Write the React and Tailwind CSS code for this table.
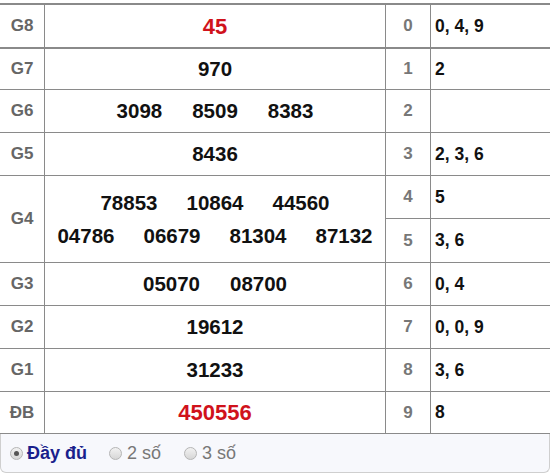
import React from 'react';

const rows = [
  { label: 'G8', nums: ['45'], big: 'red' },
  { label: 'G7', nums: ['970'] },
  { label: 'G6', nums: ['3098', '8509', '8383'] },
  { label: 'G5', nums: ['8436'] },
  { label: 'G4', nums: [['78853', '10864', '44560'], ['04786', '06679', '81304', '87132']] },
  { label: 'G3', nums: ['05070', '08700'] },
  { label: 'G2', nums: ['19612'] },
  { label: 'G1', nums: ['31233'] },
  { label: 'ĐB', nums: ['450556'], big: 'special' },
];

const heads = ['0, 4, 9', '2', '', '2, 3, 6', '5', '3, 6', '0, 4', '0, 0, 9', '3, 6', '8'];

// row boxes incl. bottom border
const rowH = ['h-[44px]', 'h-[41px]', 'h-[43px]', 'h-[43px]', 'h-[87px]', 'h-[43px]', 'h-[43px]', 'h-[43px]', 'h-[42px]'];
const headH = ['h-[44px]', 'h-[41px]', 'h-[43px]', 'h-[43px]', 'h-[43px]', 'h-[44px]', 'h-[43px]', 'h-[43px]', 'h-[43px]', 'h-[42px]'];

function Numbers({ row }) {
  if (row.big === 'red') {
    return <span className="text-[22px] text-[#d0121b]">{row.nums[0]}</span>;
  }
  if (row.big === 'special') {
    return <span className="text-[22px] font-bold text-[#d0121b]">{row.nums[0]}</span>;
  }
  if (Array.isArray(row.nums[0])) {
    return (
      <div className="flex flex-col gap-[10px] leading-[23px]">
        {row.nums.map((line, i) => (
          <div key={i} className="flex justify-center gap-[29px]">
            {line.map((n) => <span key={n}>{n}</span>)}
          </div>
        ))}
      </div>
    );
  }
  return (
    <div className="flex justify-center gap-[30px]">
      {row.nums.map((n) => <span key={n}>{n}</span>)}
    </div>
  );
}

function Radio({ checked }) {
  return (
    <span className="w-[13px] h-[13px] rounded-full border border-[#b5b5b5] bg-gradient-to-b from-[#f2f2f2] to-[#d6d6d6] flex items-center justify-center">
      {checked && <span className="w-[5px] h-[5px] rounded-full bg-[#555]" />}
    </span>
  );
}

export default function App() {
  return (
    <div className="w-[550px] h-[474px] bg-white overflow-hidden font-['Liberation_Sans',Arial,sans-serif]">
      <div className="mt-[3px] border-t-2 border-[#8a8a8a] flex">
        {/* prizes */}
        <div className="w-[386px] flex flex-col">
          {rows.map((row, i) => (
            <div
              key={row.label}
              className={`flex ${rowH[i]} ${i === 0 ? 'border-b-2' : 'border-b'} border-[#8a8a8a]`}
            >
              <div className="w-[45px] border-r border-[#8a8a8a] flex items-center justify-center text-[17px] font-bold text-[#666]">
                {row.label}
              </div>
              <div className="flex-1 border-r border-[#8a8a8a] flex items-center justify-center text-[20.5px] font-bold text-[#111]">
                <Numbers row={row} />
              </div>
            </div>
          ))}
        </div>
        {/* head digits */}
        <div className="flex-1 flex flex-col">
          {heads.map((v, i) => (
            <div
              key={i}
              className={`flex ${headH[i]} ${i === 0 ? 'border-b-2' : 'border-b'} border-[#8a8a8a]`}
            >
              <div className="w-[45px] border-r border-[#8a8a8a] flex items-center justify-center text-[17px] font-bold text-[#777]">
                {i}
              </div>
              <div className="flex-1 flex items-center pl-[4px] text-[17.5px] font-bold text-[#111]">
                {v}
              </div>
            </div>
          ))}
        </div>
      </div>
      <div className="h-[39px] bg-[#f7f8fc] border-b border-x border-[#cfcfcf] rounded-b-[6px] flex items-center pl-[9px] text-[18px]">
        <label className="flex items-center gap-[4px]">
          <Radio checked />
          <span className="font-bold text-[#1a1f8c]">Đầy đủ</span>
        </label>
        <label className="flex items-center gap-[5px] ml-[22px] text-[#777]">
          <Radio />
          <span>2 số</span>
        </label>
        <label className="flex items-center gap-[5px] ml-[23px] text-[#777]">
          <Radio />
          <span>3 số</span>
        </label>
      </div>
    </div>
  );
}
